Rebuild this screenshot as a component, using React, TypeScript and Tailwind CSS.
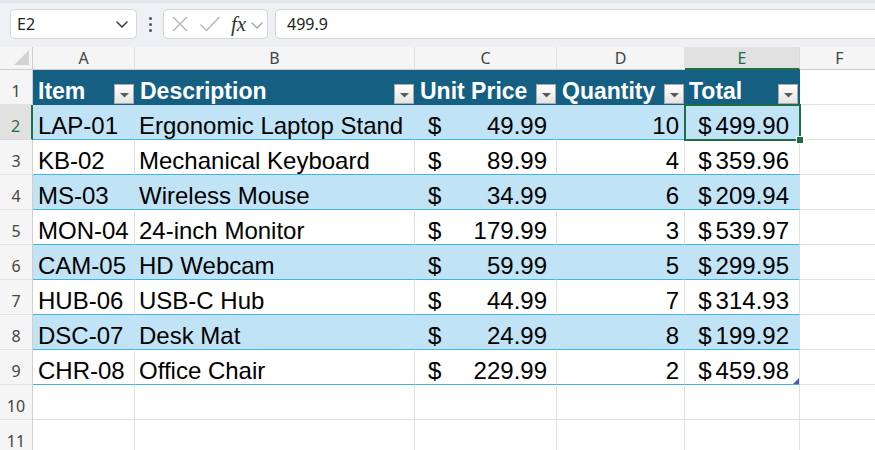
import React from "react";

type Row = { item: string; desc: string; price: string; qty: string; total: string };

const rows: Row[] = [
  { item: "LAP-01", desc: "Ergonomic Laptop Stand", price: "49.99", qty: "10", total: "499.90" },
  { item: "KB-02", desc: "Mechanical Keyboard", price: "89.99", qty: "4", total: "359.96" },
  { item: "MS-03", desc: "Wireless Mouse", price: "34.99", qty: "6", total: "209.94" },
  { item: "MON-04", desc: "24-inch Monitor", price: "179.99", qty: "3", total: "539.97" },
  { item: "CAM-05", desc: "HD Webcam", price: "59.99", qty: "5", total: "299.95" },
  { item: "HUB-06", desc: "USB-C Hub", price: "44.99", qty: "7", total: "314.93" },
  { item: "DSC-07", desc: "Desk Mat", price: "24.99", qty: "8", total: "199.92" },
  { item: "CHR-08", desc: "Office Chair", price: "229.99", qty: "2", total: "459.98" },
];

const colHeads = [
  { k: "A", w: "w-[102px]" },
  { k: "B", w: "w-[280px]" },
  { k: "C", w: "w-[142px]" },
  { k: "D", w: "w-[128px]" },
  { k: "E", w: "w-[115px]" },
  { k: "F", w: "w-[80px]" },
];

function FilterBtn() {
  return (
    <div className="w-[20px] h-[20px] box-border border border-[#ababab] bg-linear-to-b from-white to-[#e4e4e4] flex items-center justify-center mb-[1px] mr-[1px] shrink-0">
      <svg width="9" height="5" viewBox="0 0 9 5" className="mt-[3px]">
        <path d="M0 0h9L4.5 4.5z" fill="#5b5b5b" />
      </svg>
    </div>
  );
}

function RowHead({ n, active }: { n: number; active?: boolean }) {
  return (
    <div
      className={
        active
          ? "w-[33px] h-[35px] shrink-0 box-border border-b border-b-[#d8d8d8] border-r-2 border-r-[#1e6e42] bg-[#e1e1e1] flex items-end justify-center pb-[4px] text-[16px] leading-[18px] text-[#1e6e42] font-['Noto_Sans',sans-serif]"
          : "w-[33px] h-[35px] shrink-0 box-border border-b border-b-[#e1e1e1] border-r border-r-[#cfcfcf] bg-[#f5f5f5] flex items-end justify-center pb-[4px] text-[16px] leading-[18px] text-[#444444] font-['Noto_Sans',sans-serif]"
      }
    >
      {n}
    </div>
  );
}

const cellBase = "h-[35px] shrink-0 box-border border-b border-r flex items-end pb-[1px] text-[24px] leading-[24px] text-black whitespace-nowrap";

export default function App() {
  return (
    <div className="relative w-[875px] h-[450px] overflow-hidden bg-white font-['Liberation_Sans',Arial,sans-serif]">
      {/* Formula bar */}
      <div className="h-[47px] bg-[#eef0f3] border-t-[3px] border-t-[#e3e6ea] box-border flex items-start pt-[6px] pl-[10px]">
        <div className="w-[127px] h-[30px] box-border rounded-[5px] border border-[#d3d5d8] bg-white flex items-center justify-between pl-[6px] pr-[8px]">
          <span className="text-[16px] text-[#222] font-['Noto_Sans',sans-serif]">E2</span>
          <svg width="12" height="7" viewBox="0 0 12 7">
            <path d="M1 1l5 5 5-5" fill="none" stroke="#3a3a3a" strokeWidth="1.5" strokeLinecap="round" strokeLinejoin="round" />
          </svg>
        </div>
        <div className="w-[26px] h-[30px] flex flex-col items-center justify-center gap-[3px]">
          <div className="w-[3px] h-[3px] rounded-full bg-[#555]" />
          <div className="w-[3px] h-[3px] rounded-full bg-[#555]" />
          <div className="w-[3px] h-[3px] rounded-full bg-[#555]" />
        </div>
        <div className="w-[105px] h-[30px] box-border rounded-[5px] border border-[#d3d5d8] bg-white flex items-center pl-[6px]">
          <svg width="18" height="18" viewBox="0 0 18 18" className="ml-[1px]">
            <path d="M2 2l14 14M16 2L2 16" fill="none" stroke="#b4b4b4" strokeWidth="1.4" />
          </svg>
          <svg width="22" height="18" viewBox="0 0 22 18" className="ml-[10px]">
            <path d="M1.5 9.5l6 6L20.5 2" fill="none" stroke="#b4b4b4" strokeWidth="1.4" />
          </svg>
          <span className="ml-[10px] text-[21px] leading-none italic text-[#333] font-['Liberation_Serif',serif]">fx</span>
          <svg width="12" height="7" viewBox="0 0 12 7" className="ml-[5px] mt-[2px]">
            <path d="M1 1l5 5 5-5" fill="none" stroke="#9a9a9a" strokeWidth="1.2" strokeLinecap="round" strokeLinejoin="round" />
          </svg>
        </div>
        <div className="ml-[7px] flex-1 -mr-[10px] h-[30px] box-border rounded-l-[5px] border border-[#d3d5d8] bg-white flex items-center pl-[11px]">
          <span className="text-[16px] text-[#222] font-['Noto_Sans',sans-serif]">499.9</span>
        </div>
      </div>

      {/* Column headers */}
      <div className="flex h-[23px] bg-[#f5f5f5]">
        <div className="w-[33px] h-[23px] shrink-0 box-border border-r border-r-[#cfcfcf] border-b border-b-[#cfcfcf] flex items-end justify-end pr-[3px] pb-[4px]">
          <svg width="15" height="15" viewBox="0 0 15 15">
            <path d="M15 0V15H0z" fill="#d3d3d3" />
          </svg>
        </div>
        {colHeads.map((c) =>
          c.k === "E" ? (
            <div
              key={c.k}
              className={`${c.w} h-[23px] shrink-0 box-border border-r border-r-[#d8d8d8] border-b-2 border-b-[#1e6e42] bg-[#e1e1e1] flex items-center justify-center text-[16px] text-[#1e6e42] font-['Noto_Sans',sans-serif]`}
            >
              {c.k}
            </div>
          ) : (
            <div
              key={c.k}
              className={`${c.w} h-[23px] shrink-0 box-border border-r border-r-[#e1e1e1] border-b border-b-[#cfcfcf] flex items-center justify-center text-[16px] text-[#444444] font-['Noto_Sans',sans-serif]`}
            >
              {c.k}
            </div>
          )
        )}
      </div>

      {/* Row 1 - table header */}
      <div className="flex">
        <RowHead n={1} />
        <div className="w-[102px] h-[35px] shrink-0 box-border bg-[#156082] flex items-end justify-between pl-[5px] text-white font-bold text-[23px] leading-[24px]">
          <span className="pb-[2px]">Item</span>
          <FilterBtn />
        </div>
        <div className="w-[280px] h-[35px] shrink-0 box-border bg-[#156082] flex items-end justify-between pl-[5px] text-white font-bold text-[23px] leading-[24px]">
          <span className="pb-[2px]">Description</span>
          <FilterBtn />
        </div>
        <div className="w-[142px] h-[35px] shrink-0 box-border bg-[#156082] flex items-end justify-between pl-[5px] text-white font-bold text-[23px] leading-[24px]">
          <span className="pb-[2px]">Unit Price</span>
          <FilterBtn />
        </div>
        <div className="w-[128px] h-[35px] shrink-0 box-border bg-[#156082] flex items-end justify-between pl-[5px] text-white font-bold text-[23px] leading-[24px]">
          <span className="pb-[2px]">Quantity</span>
          <FilterBtn />
        </div>
        <div className="w-[115px] h-[35px] shrink-0 box-border bg-[#156082] flex items-end justify-between pl-[4px] text-white font-bold text-[23px] leading-[24px]">
          <span className="pb-[2px]">Total</span>
          <span className="mr-[1px]">
            <FilterBtn />
          </span>
        </div>
        <div className="w-[80px] h-[35px] shrink-0 box-border border-b border-r border-[#e1e1e1]" />
      </div>

      {/* Data rows */}
      {rows.map((r, i) => {
        const band = i % 2 === 0;
        const bg = band ? "bg-[#c0e4f5] border-r-[#c0e4f5]" : "bg-white border-r-[#e1e1e1]";
        return (
          <div className="flex" key={r.item}>
            <RowHead n={i + 2} active={i === 0} />
            <div className={`${cellBase} ${bg} border-b-[#44b3e1] w-[102px] pl-[5px]`}>{r.item}</div>
            <div className={`${cellBase} ${bg} border-b-[#44b3e1] w-[280px] pl-[4px]`}>{r.desc}</div>
            <div className={`${cellBase} ${bg} border-b-[#44b3e1] w-[142px] pl-[13px] pr-[9px] justify-between`}>
              <span>$</span>
              <span>{r.price}</span>
            </div>
            <div className={`${cellBase} ${bg} border-b-[#44b3e1] w-[128px] pr-[5px] justify-end`}>{r.qty}</div>
            <div className={`${cellBase} ${bg} border-b-[#44b3e1] w-[115px] pr-[10px] justify-end`}>
              <span>$</span>
              <span className="ml-[4px]">{r.total}</span>
            </div>
            <div className={`${cellBase} bg-white border-b-[#e1e1e1] border-r-[#e1e1e1] w-[80px]`} />
          </div>
        );
      })}

      {/* Empty rows */}
      {[10, 11].map((n) => (
        <div className="flex" key={n}>
          <RowHead n={n} />
          {colHeads.map((c) => (
            <div key={c.k} className={`${c.w} h-[35px] shrink-0 box-border border-b border-r border-[#e1e1e1]`} />
          ))}
        </div>
      ))}

      {/* Selection overlay on E2 */}
      <div className="absolute left-[684px] top-[104px] w-[117px] h-[37px] box-border border-2 border-[#1e6e42] pointer-events-none" />
      <div className="absolute left-[797px] top-[137px] w-[6px] h-[6px] bg-[#1e6e42] outline outline-1 outline-white" />

      {/* Table resize handle */}
      <svg className="absolute left-[793px] top-[378px]" width="6" height="6" viewBox="0 0 6 6">
        <path d="M6 0V6H0z" fill="#4759c0" />
      </svg>
    </div>
  );
}
